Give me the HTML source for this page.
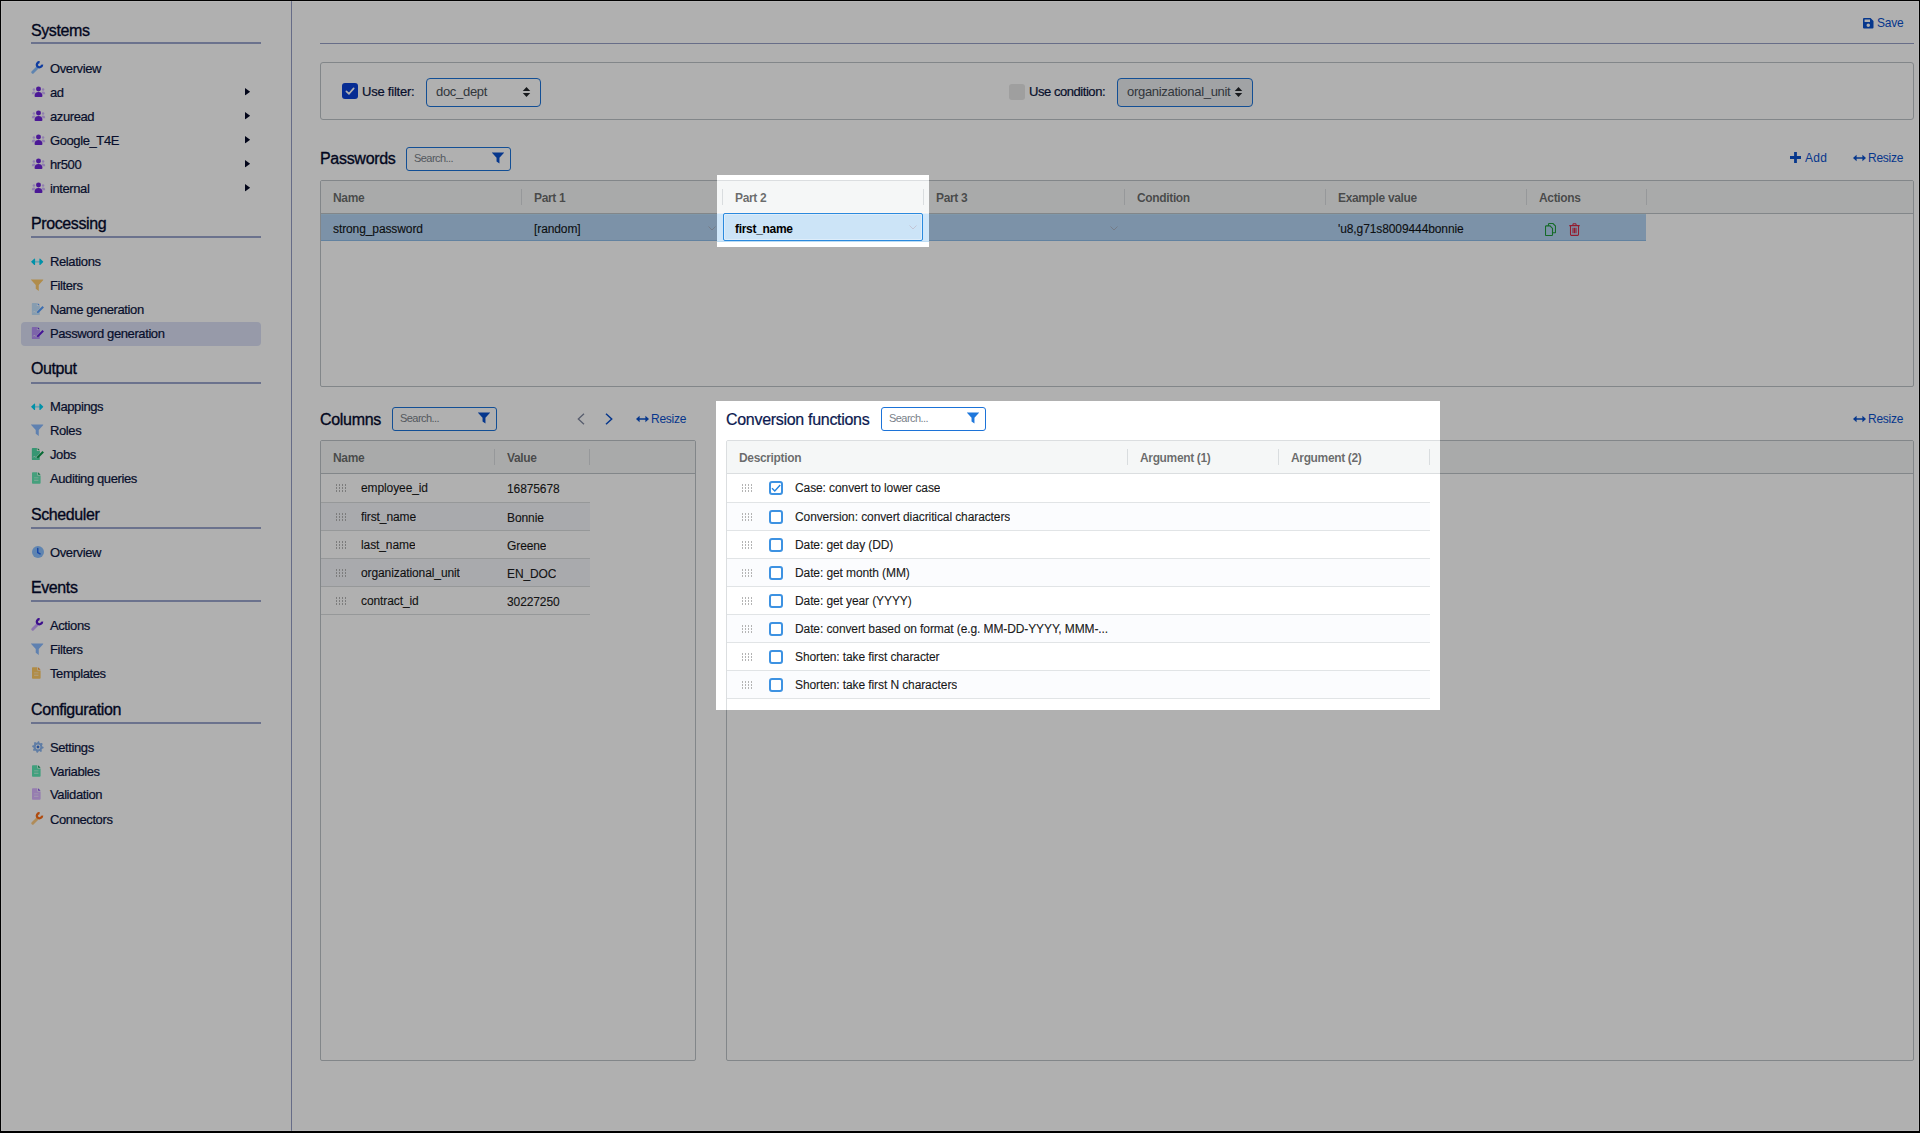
<!DOCTYPE html>
<html lang="en">
<head>
<meta charset="utf-8">
<title>Password generation</title>
<style>
*{box-sizing:border-box;}
html,body{margin:0;padding:0;}
body{width:1920px;height:1133px;overflow:hidden;background:#fff;position:relative;
  font-family:"Liberation Sans",sans-serif;font-size:13px;color:#0b1540;}
.abs{position:absolute;}
svg{display:block;}

/* ---------- sidebar ---------- */
#sidebar{position:absolute;left:0;top:0;width:291px;height:1133px;}
#sidedivider{position:absolute;left:291px;top:0;width:1px;height:1133px;background:#949dc4;}
.sh{position:absolute;left:31px;height:24px;line-height:26px;font-size:16px;color:#040a2e;letter-spacing:-0.4px;white-space:nowrap;-webkit-text-stroke:0.33px #040a2e;}
.sl{position:absolute;left:31px;width:230px;height:2px;background:#9ba6cd;}
.si{position:absolute;left:21px;width:240px;height:24px;line-height:24px;border-radius:4px;white-space:nowrap;}
.selbg{position:absolute;left:0;top:1px;width:240px;height:24px;border-radius:4px;background:#dbe0f5;}
.si .ic{position:absolute;left:10px;top:6px;width:14px;height:14px;}
.si .tx{position:absolute;left:29px;top:1px;font-size:13px;color:#0b1540;letter-spacing:-0.4px;-webkit-text-stroke:0.2px #0b1540;}
.si .car{position:absolute;left:224px;top:8px;width:5.5px;height:7.5px;}

/* ---------- main ---------- */
.link{position:absolute;height:20px;line-height:20px;font-size:13px;color:#0a50cc;white-space:nowrap;}
.link span{display:inline-block;transform:scaleX(.92);transform-origin:0 50%;letter-spacing:-0.25px;}
.hline{position:absolute;left:320px;top:43px;width:1594px;height:1px;background:#969fc6;}
.box{position:absolute;border:1px solid #bdc3c7;background:#fff;border-radius:3px;}
.h2{position:absolute;height:24px;line-height:26px;font-size:16px;color:#040a2e;letter-spacing:-0.3px;white-space:nowrap;-webkit-text-stroke:0.33px #040a2e;}
.lbl{position:absolute;height:20px;line-height:20px;font-size:13px;color:#0b1540;white-space:nowrap;letter-spacing:-0.45px;-webkit-text-stroke:0.2px #0b1540;}
.dd{position:absolute;height:29px;border:1px solid #1c73d8;border-radius:4px;background:#fff;font-size:13px;line-height:25px;color:#495057;padding-left:9px;white-space:nowrap;letter-spacing:-0.3px;}
.dd.dis{background:#e9ecef;}
.dd svg{position:absolute;top:8px;width:9px;height:10px;}
.search{position:absolute;width:105px;height:24px;border:1px solid #1c73d8;border-radius:3px;background:#fff;font-size:11px;line-height:20px;color:#79818a;padding-left:7px;letter-spacing:-0.55px;}
.search svg{position:absolute;right:6px;top:4px;width:12px;height:12px;}
.cb{position:absolute;width:16px;height:16px;border-radius:3px;}

/* ---------- grids (ag balham look) ---------- */
.grid{position:absolute;border:1px solid #bdc3c7;border-radius:2px;background:#fff;overflow:hidden;font-size:12px;color:rgba(0,0,0,.88);}
.ghead{position:absolute;left:0;top:0;right:0;height:33px;background:#f5f7f7;border-bottom:1px solid #bdc3c7;}
.hc{position:absolute;top:0;height:32px;line-height:34px;padding-left:12px;font-weight:bold;font-size:12px;color:rgba(0,0,0,.58);white-space:nowrap;letter-spacing:-0.35px;}
.hc:after{content:"";position:absolute;right:0;top:8px;width:1px;height:16px;background:rgba(189,195,199,.5);}
.row{position:absolute;left:0;height:28px;line-height:29px;white-space:nowrap;}
.row.odd{background:#fbfcfe;}
.dk .row.odd{background:#f5f6fb;}
.row.bt{border-top:1px solid #d9dcde;}
.row.bb{border-bottom:1px solid #d9dcde;height:29px;}
.lt3 .row.bt{border-top-color:#e1e4e6;}
.lt3 .row.bb{border-bottom-color:#e1e4e6;}
.cell{position:absolute;top:0;height:28px;white-space:nowrap;overflow:hidden;letter-spacing:-0.1px;-webkit-text-stroke:0.18px rgba(0,0,0,.88);}
.grip{position:absolute;width:11px;height:8px;}
.chk{position:absolute;width:14px;height:14px;border:2px solid #3d92e2;border-radius:3px;background:#fff;}

/* ---------- dim overlay ---------- */
.lt{position:absolute;z-index:56;background:rgba(255,255,255,.45);}
#dim{position:absolute;left:0;top:0;width:1920px;height:1133px;z-index:50;pointer-events:none;}
#frame{position:absolute;left:0;top:0;width:1920px;height:1133px;z-index:60;pointer-events:none;border:1px solid #000;border-bottom:2px solid #000;box-shadow:inset 0 0 0 1px rgba(255,255,255,.09);}
</style>
</head>
<body>

<!-- icon definitions -->
<svg width="0" height="0" style="position:absolute">
  <defs>
    <symbol id="i-wrench" viewBox="0 0 14 14">
      <path d="M1.9 12.1 L7 7" stroke="var(--c2)" stroke-width="3.1" stroke-linecap="round" fill="none"/>
      <path d="M11.9 3.9 A2.8 2.8 0 1 1 9.3 1.2" stroke="currentColor" stroke-width="2.5" fill="none"/>
    </symbol>
    <symbol id="i-users" viewBox="0 0 15 12">
      <circle cx="2.5" cy="3.9" r="1.35" fill="var(--c2)"/>
      <circle cx="12.5" cy="3.9" r="1.35" fill="var(--c2)"/>
      <path d="M.2 8.4 Q.2 6 2.5 6 Q4 6 4.4 6.8 Q3.2 7.6 3.1 9 L.2 9 Z" fill="var(--c2)"/>
      <path d="M14.8 8.4 Q14.8 6 12.5 6 Q11 6 10.6 6.8 Q11.8 7.6 11.9 9 L14.8 9 Z" fill="var(--c2)"/>
      <circle cx="7.5" cy="3.2" r="2.7" fill="currentColor"/>
      <path d="M3.2 11 Q3.2 6.6 7.5 6.6 Q11.8 6.6 11.8 11 Q11.8 12 10.8 12 L4.2 12 Q3.2 12 3.2 11 Z" fill="currentColor"/>
    </symbol>
    <symbol id="i-arrows" viewBox="0 0 14 8">
      <rect x="4" y="3" width="6" height="2" fill="var(--c2)"/>
      <path d="M0 4 L3.6 .5 Q4.6 -.2 4.6 1 L4.6 7 Q4.6 8.2 3.6 7.5 Z M14 4 L10.4 .5 Q9.4 -.2 9.4 1 L9.4 7 Q9.4 8.2 10.4 7.5 Z" fill="currentColor"/>
    </symbol>
    <symbol id="i-filter" viewBox="0 0 14 14">
      <path d="M.4 .5 L13.6 .5 Q14.3 .5 13.8 1.2 L8.7 6.6 L8.7 13.4 L5.3 11 L5.3 6.6 L.2 1.2 Q-.3 .5 .4 .5 Z" fill="currentColor"/>
    </symbol>
    <symbol id="i-filesig" viewBox="0 0 15 14">
      <path d="M.6 1 Q.6 0 1.6 0 L6.5 0 L6.5 3.5 L10 3.5 L10 6 L5.8 10.2 L5.4 14 L1.6 14 Q.6 14 .6 13 Z M6 10.4 L9.8 10.4 L9.8 14 L5.4 14 Z" fill="var(--c2)"/>
      <path d="M7.4 0 L10 2.7 L7.4 2.7 Z" fill="currentColor"/>
      <path d="M13 3.6 L14.7 5.3 L8.6 11.4 L6.6 11.8 L7 9.7 Z" fill="currentColor"/>
      <path d="M2 11.2 L3.4 9.4 L4.3 10.8 L5.4 10.4" stroke="#fff" stroke-opacity=".7" stroke-width=".8" fill="none"/>
    </symbol>
    <symbol id="i-file" viewBox="0 0 11 14">
      <path d="M0 1 Q0 0 1 0 L6.6 0 L6.6 3.9 L10.5 3.9 L10.5 13 Q10.5 14 9.5 14 L1 14 Q0 14 0 13 Z" fill="var(--c2)"/>
      <path d="M2.6 9.2 H7.9 V10.5 H2.6 Z M2.6 6.4 H7.9 V7.3 H2.6 Z" fill="#fff" fill-opacity=".6"/>
      <path d="M7.5 0 L10.5 3 L7.5 3 Z" fill="currentColor"/>
    </symbol>
    <symbol id="i-clock" viewBox="0 0 14 14">
      <circle cx="7" cy="7" r="7" fill="var(--c2)"/>
      <path d="M6.7 3 L6.7 7.6 L9.4 9.2" stroke="currentColor" stroke-width="1.7" fill="none" stroke-linecap="round"/>
    </symbol>
    <symbol id="i-cog" viewBox="0 0 14 14">
      <path d="M7 0.2 L8.3 .4 L8.7 2 L10 2.7 L11.6 2.2 L12.6 3.6 L11.6 4.9 L12 6.3 L13.6 7 L13.4 8.6 L11.8 9 L11.1 10.3 L11.6 11.9 L10.2 12.7 L8.9 11.8 L7.5 12.2 L6.8 13.8 L5.2 13.5 L4.9 11.9 L3.6 11.2 L2 11.7 L1.1 10.3 L2.1 9 L1.7 7.6 L.2 6.9 L.4 5.3 L2 4.9 L2.7 3.6 L2.2 2 L3.6 1.2 L4.9 2.1 L6.3 1.7 Z M7 4.2 A2.8 2.8 0 1 0 7 9.8 A2.8 2.8 0 1 0 7 4.2 Z" fill="var(--c2)" fill-rule="evenodd"/>
      <circle cx="7" cy="7" r="1.7" fill="currentColor"/>
    </symbol>
    <symbol id="i-caret" viewBox="0 0 6 8"><path d="M0 0 L5.6 4 L0 8 Z" fill="#050a26"/></symbol>
    <symbol id="i-updown" viewBox="0 0 9 11"><path d="M4.5 0 L8.6 4.4 L.4 4.4 Z M4.5 11 L8.6 6.6 L.4 6.6 Z" fill="#23272b"/></symbol>
    <symbol id="i-grip" viewBox="0 0 11 8">
      <g fill="#b4b4b4"><rect x="0" y="0" width="1" height="2"/><rect x="3" y="0" width="1" height="2"/><rect x="6" y="0" width="1" height="2"/><rect x="9" y="0" width="1" height="2"/>
      <rect x="0" y="3" width="1" height="2"/><rect x="3" y="3" width="1" height="2"/><rect x="6" y="3" width="1" height="2"/><rect x="9" y="3" width="1" height="2"/>
      <rect x="0" y="6" width="1" height="2"/><rect x="3" y="6" width="1" height="2"/><rect x="6" y="6" width="1" height="2"/><rect x="9" y="6" width="1" height="2"/></g>
    </symbol>
    <symbol id="i-chev" viewBox="0 0 8 5"><path d="M.5 .5 L4 4 L7.5 .5" stroke="currentColor" stroke-width="1" fill="none"/></symbol>
  </defs>
</svg>

<div id="sidebar">
<div class="sh" style="top:18px">Systems</div>
<div class="sl" style="top:42px"></div>
<div class="si" style="top:56px"><svg class="ic" style="color:#1657e8;--c2:#8ac0ff;width:13px;height:13px;top:5px;left:10px"><use href="#i-wrench"/></svg><span class="tx">Overview</span></div>
<div class="si" style="top:80px"><svg class="ic" style="color:#6d24d9;--c2:#d3b8ff;width:15px;height:11px;top:6px;left:10px"><use href="#i-users"/></svg><span class="tx">ad</span><svg class="car"><use href="#i-caret"/></svg></div>
<div class="si" style="top:104px"><svg class="ic" style="color:#6d24d9;--c2:#d3b8ff;width:15px;height:11px;top:6px;left:10px"><use href="#i-users"/></svg><span class="tx">azuread</span><svg class="car"><use href="#i-caret"/></svg></div>
<div class="si" style="top:128px"><svg class="ic" style="color:#6d24d9;--c2:#d3b8ff;width:15px;height:11px;top:6px;left:10px"><use href="#i-users"/></svg><span class="tx">Google_T4E</span><svg class="car"><use href="#i-caret"/></svg></div>
<div class="si" style="top:152px"><svg class="ic" style="color:#6d24d9;--c2:#d3b8ff;width:15px;height:11px;top:6px;left:10px"><use href="#i-users"/></svg><span class="tx">hr500</span><svg class="car"><use href="#i-caret"/></svg></div>
<div class="si" style="top:176px"><svg class="ic" style="color:#6d24d9;--c2:#d3b8ff;width:15px;height:11px;top:6px;left:10px"><use href="#i-users"/></svg><span class="tx">internal</span><svg class="car"><use href="#i-caret"/></svg></div>
<div class="sh" style="top:211px">Processing</div>
<div class="sl" style="top:236px"></div>
<div class="si" style="top:249px"><svg class="ic" style="color:#00d3f5;--c2:#9beeff;width:12.5px;height:7.5px;top:8.5px;left:10px"><use href="#i-arrows"/></svg><span class="tx">Relations</span></div>
<div class="si" style="top:273px"><svg class="ic" style="color:#ffcb6d;--c2:#ffcb6d;width:12.5px;height:12.5px;top:6px;left:10px"><use href="#i-filter"/></svg><span class="tx">Filters</span></div>
<div class="si" style="top:297px"><svg class="ic" style="color:#579fff;--c2:#c4e4ff;width:13.5px;height:12px;top:6px;left:10px"><use href="#i-filesig"/></svg><span class="tx">Name generation</span></div>
<div class="si" style="top:321px"><div class="selbg"></div><svg class="ic" style="color:#651dd9;--c2:#b591f6;width:13.5px;height:12px;top:6px;left:10px"><use href="#i-filesig"/></svg><span class="tx">Password generation</span></div>
<div class="sh" style="top:356px">Output</div>
<div class="sl" style="top:382px"></div>
<div class="si" style="top:394px"><svg class="ic" style="color:#00d3f5;--c2:#9beeff;width:12.5px;height:7.5px;top:8.5px;left:10px"><use href="#i-arrows"/></svg><span class="tx">Mappings</span></div>
<div class="si" style="top:418px"><svg class="ic" style="color:#8abbff;--c2:#8abbff;width:12.5px;height:12.5px;top:6px;left:10px"><use href="#i-filter"/></svg><span class="tx">Roles</span></div>
<div class="si" style="top:442px"><svg class="ic" style="color:#0a9a4c;--c2:#50d9a7;width:13.5px;height:12px;top:6px;left:10px"><use href="#i-filesig"/></svg><span class="tx">Jobs</span></div>
<div class="si" style="top:466px"><svg class="ic" style="color:#0a9e55;--c2:#65e8b5;width:9px;height:12px;top:6px;left:10.5px"><use href="#i-file"/></svg><span class="tx">Auditing queries</span></div>
<div class="sh" style="top:502px">Scheduler</div>
<div class="sl" style="top:527px"></div>
<div class="si" style="top:540px"><svg class="ic" style="color:#1d65f6;--c2:#8ac0ff;width:12px;height:12px;top:6px;left:10.5px"><use href="#i-clock"/></svg><span class="tx">Overview</span></div>
<div class="sh" style="top:575px">Events</div>
<div class="sl" style="top:600px"></div>
<div class="si" style="top:613px"><svg class="ic" style="color:#5716cb;--c2:#cba7ff;width:13px;height:13px;top:5px;left:10px"><use href="#i-wrench"/></svg><span class="tx">Actions</span></div>
<div class="si" style="top:637px"><svg class="ic" style="color:#8abbff;--c2:#8abbff;width:12.5px;height:12.5px;top:6px;left:10px"><use href="#i-filter"/></svg><span class="tx">Filters</span></div>
<div class="si" style="top:661px"><svg class="ic" style="color:#ff911d;--c2:#ffcb65;width:9px;height:12px;top:6px;left:10.5px"><use href="#i-file"/></svg><span class="tx">Templates</span></div>
<div class="sh" style="top:697px">Configuration</div>
<div class="sl" style="top:722px"></div>
<div class="si" style="top:735px"><svg class="ic" style="color:#3a74d9;--c2:#8ab5ef;width:12px;height:12px;top:6px;left:10.5px"><use href="#i-cog"/></svg><span class="tx">Settings</span></div>
<div class="si" style="top:759px"><svg class="ic" style="color:#009f57;--c2:#5ee8b5;width:9px;height:12px;top:6px;left:10.5px"><use href="#i-file"/></svg><span class="tx">Variables</span></div>
<div class="si" style="top:782px"><svg class="ic" style="color:#8248e8;--c2:#d9b5ff;width:9px;height:12px;top:6px;left:10.5px"><use href="#i-file"/></svg><span class="tx">Validation</span></div>
<div class="si" style="top:807px"><svg class="ic" style="color:#fe6d16;--c2:#ffcb82;width:13px;height:13px;top:5px;left:10px"><use href="#i-wrench"/></svg><span class="tx">Connectors</span></div>
</div>
<div id="sidedivider"></div>
<div id="main">
<!-- top bar -->
<div class="link" style="left:1862px;top:13px;"><svg style="position:absolute;left:1px;top:5px;width:10.5px;height:10.5px;color:#0a50cc" viewBox="0 0 12 12"><path d="M1.2 0 H8.6 L12 3.4 V10.8 Q12 12 10.8 12 H1.2 Q0 12 0 10.8 V1.2 Q0 0 1.2 0 Z M1.8 1.6 V4.6 H8 V1.6 Z M6 6.3 A2 2 0 1 0 6 10.3 A2 2 0 1 0 6 6.3 Z" fill="currentColor" fill-rule="evenodd"/></svg><span style="margin-left:15px">Save</span></div>
<div class="hline"></div>

<!-- filter / condition box -->
<div class="box" style="left:320px;top:62px;width:1594px;height:58px;"></div>
<div class="cb" style="left:342px;top:83px;background:#0a40d6;"><svg viewBox="0 0 16 16" width="16" height="16"><path d="M4.4 8.3 L7 10.8 L11.7 5.4" stroke="#fff" stroke-width="1.7" fill="none" stroke-linecap="round" stroke-linejoin="round"/></svg></div>
<div class="lbl" style="left:362px;top:82px;letter-spacing:-0.22px">Use filter:</div>
<div class="dd" style="left:426px;top:78px;width:115px;">doc_dept<svg style="left:95px"><use href="#i-updown"/></svg></div>
<div class="cb" style="left:1009px;top:84px;background:#e6e6e6;"></div>
<div class="lbl" style="left:1029px;top:82px;">Use condition:</div>
<div class="dd dis" style="left:1117px;top:78px;width:136px;">organizational_unit<svg style="left:116px"><use href="#i-updown"/></svg></div>

<!-- passwords -->
<div class="h2" style="left:320px;top:146px;">Passwords</div>
<div class="search" style="left:406px;top:147px;">Search...<svg style="color:#0a50cc"><use href="#i-filter"/></svg></div>
<div class="link" style="left:1790px;top:148px;"><svg style="position:absolute;left:0;top:4px;width:11px;height:11px;color:#0a50cc" viewBox="0 0 11 11"><path d="M4.1 0 H6.9 V4.1 H11 V6.9 H6.9 V11 H4.1 V6.9 H0 V4.1 H4.1 Z" fill="currentColor"/></svg><span style="margin-left:15px;letter-spacing:.35px">Add</span></div>
<div class="link" style="left:1853px;top:148px;"><svg style="position:absolute;left:0;top:6px;width:13px;height:8px;color:#0a50cc" viewBox="0 0 13 8"><path d="M0 4 L3.6 .8 V3.2 H9.4 V.8 L13 4 L9.4 7.2 V4.8 H3.6 V7.2 Z" fill="currentColor"/></svg><span style="margin-left:15px">Resize</span></div>

<div class="grid" id="g1" style="left:320px;top:180px;width:1594px;height:207px;">
  <div class="ghead">
    <div class="hc" style="left:0;width:201px;">Name</div>
    <div class="hc" style="left:201px;width:201px;">Part 1</div>
    <div class="hc" style="left:402px;width:201px;">Part 2</div>
    <div class="hc" style="left:603px;width:201px;">Part 3</div>
    <div class="hc" style="left:804px;width:201px;">Condition</div>
    <div class="hc" style="left:1005px;width:201px;">Example value</div>
    <div class="hc" style="left:1206px;width:120px;">Actions</div>
  </div>
  <div class="row" style="top:33px;width:1325px;height:27px;background:#b4d4f3;border-top:1px solid #b9dbf5;border-bottom:1px solid #8fbde8;">
    <div class="cell" style="left:12px;">strong_password</div>
    <div class="cell" style="left:213px;">[random]</div>
    <svg style="position:absolute;left:387px;top:11px;width:8px;height:5px;color:#a9b4c6"><use href="#i-chev"/></svg>
    <svg style="position:absolute;left:789px;top:11px;width:8px;height:5px;color:#a9b4c6"><use href="#i-chev"/></svg>
    <div class="cell" style="left:1017px;">'u8,g71s8009444bonnie</div>
    <svg style="position:absolute;left:1224px;top:8px;width:11px;height:13px;" viewBox="0 0 11 13"><path d="M3.5 2.5 V1.3 Q3.5 .5 4.3 .5 H8 L10.5 3 V9 Q10.5 9.8 9.7 9.8 H7.5 M.5 3.7 Q.5 2.9 1.3 2.9 H5 L7.5 5.4 V11.7 Q7.5 12.5 6.7 12.5 H1.3 Q.5 12.5 .5 11.7 Z" stroke="#1f9a3a" stroke-width="1.1" fill="none"/></svg>
    <svg style="position:absolute;left:1248px;top:8px;width:11px;height:13px;" viewBox="0 0 11 13"><path d="M.3 2.6 H10.7 M3.6 2.4 L4.3 .7 H6.7 L7.4 2.4 M1.5 2.8 V11.5 Q1.5 12.4 2.4 12.4 H8.6 Q9.5 12.4 9.5 11.5 V2.8 M4 4.8 V10.3 M5.5 4.8 V10.3 M7 4.8 V10.3" stroke="#d62945" stroke-width="1.1" fill="none"/></svg>
  </div>
</div>

<!-- columns -->
<div class="h2" style="left:320px;top:407px;">Columns</div>
<div class="search" style="left:392px;top:407px;">Search...<svg style="color:#0a50cc"><use href="#i-filter"/></svg></div>
<svg class="abs" style="left:577px;top:413px;width:8px;height:12px;" viewBox="0 0 8 12"><path d="M7 .7 L1.3 6 L7 11.3" stroke="#7f879f" stroke-width="1.3" fill="none"/></svg>
<svg class="abs" style="left:605px;top:413px;width:8px;height:12px;" viewBox="0 0 8 12"><path d="M1 .7 L6.7 6 L1 11.3" stroke="#0a50cc" stroke-width="1.5" fill="none"/></svg>
<div class="link" style="left:636px;top:409px;"><svg style="position:absolute;left:0;top:6px;width:13px;height:8px;color:#0a50cc" viewBox="0 0 13 8"><path d="M0 4 L3.6 .8 V3.2 H9.4 V.8 L13 4 L9.4 7.2 V4.8 H3.6 V7.2 Z" fill="currentColor"/></svg><span style="margin-left:15px">Resize</span></div>

<div class="grid dk" id="g2" style="left:320px;top:440px;width:376px;height:621px;">
  <div class="ghead">
    <div class="hc" style="left:0;width:174px;">Name</div>
    <div class="hc" style="left:174px;width:95px;">Value</div>
  </div>
  <div class="row" style="top:33px;width:269px;"><svg class="grip" style="left:15px;top:10px"><use href="#i-grip"/></svg><div class="cell" style="left:40px;">employee_id</div><div class="cell" style="left:186px;top:1px;">16875678</div></div>
  <div class="row odd bt" style="top:61px;width:269px;"><svg class="grip" style="left:15px;top:10px"><use href="#i-grip"/></svg><div class="cell" style="left:40px;">first_name</div><div class="cell" style="left:186px;top:1px;">Bonnie</div></div>
  <div class="row bt" style="top:89px;width:269px;"><svg class="grip" style="left:15px;top:10px"><use href="#i-grip"/></svg><div class="cell" style="left:40px;">last_name</div><div class="cell" style="left:186px;top:1px;">Greene</div></div>
  <div class="row odd bt" style="top:117px;width:269px;"><svg class="grip" style="left:15px;top:10px"><use href="#i-grip"/></svg><div class="cell" style="left:40px;">organizational_unit</div><div class="cell" style="left:186px;top:1px;">EN_DOC</div></div>
  <div class="row bt bb" style="top:145px;width:269px;"><svg class="grip" style="left:15px;top:10px"><use href="#i-grip"/></svg><div class="cell" style="left:40px;">contract_id</div><div class="cell" style="left:186px;top:1px;">30227250</div></div>
</div>

<!-- conversion functions -->
<div class="h2" id="cfh" style="left:726px;top:407px;color:#0c1950;-webkit-text-stroke:0.22px #0c1950;">Conversion functions</div>
<div class="search" style="left:881px;top:407px;">Search...<svg style="color:#1f78dc"><use href="#i-filter"/></svg></div>
<div class="link" style="left:1853px;top:409px;"><svg style="position:absolute;left:0;top:6px;width:13px;height:8px;color:#0a50cc" viewBox="0 0 13 8"><path d="M0 4 L3.6 .8 V3.2 H9.4 V.8 L13 4 L9.4 7.2 V4.8 H3.6 V7.2 Z" fill="currentColor"/></svg><span style="margin-left:15px">Resize</span></div>

<div class="grid lt3" id="g3" style="left:726px;top:440px;width:1188px;height:621px;">
  <div class="ghead">
    <div class="hc" style="left:0;width:401px;">Description</div>
    <div class="hc" style="left:401px;width:151px;">Argument (1)</div>
    <div class="hc" style="left:552px;width:151px;">Argument (2)</div>
  </div>
  <div class="row" style="top:33px;width:703px;"><svg class="grip" style="left:15px;top:10px"><use href="#i-grip"/></svg><div class="chk" style="left:42px;top:7px;"><svg viewBox="0 0 10 10" width="10" height="10"><path d="M1 5.2 L3.8 7.9 L9.2 2" stroke="#2383de" stroke-width="1.4" fill="none"/></svg></div><div class="cell" style="left:68px;">Case: convert to lower case</div></div>
  <div class="row odd bt" style="top:61px;width:703px;"><svg class="grip" style="left:15px;top:10px"><use href="#i-grip"/></svg><div class="chk" style="left:42px;top:7px;"></div><div class="cell" style="left:68px;">Conversion: convert diacritical characters</div></div>
  <div class="row bt" style="top:89px;width:703px;"><svg class="grip" style="left:15px;top:10px"><use href="#i-grip"/></svg><div class="chk" style="left:42px;top:7px;"></div><div class="cell" style="left:68px;">Date: get day (DD)</div></div>
  <div class="row odd bt" style="top:117px;width:703px;"><svg class="grip" style="left:15px;top:10px"><use href="#i-grip"/></svg><div class="chk" style="left:42px;top:7px;"></div><div class="cell" style="left:68px;">Date: get month (MM)</div></div>
  <div class="row bt" style="top:145px;width:703px;"><svg class="grip" style="left:15px;top:10px"><use href="#i-grip"/></svg><div class="chk" style="left:42px;top:7px;"></div><div class="cell" style="left:68px;">Date: get year (YYYY)</div></div>
  <div class="row odd bt" style="top:173px;width:703px;"><svg class="grip" style="left:15px;top:10px"><use href="#i-grip"/></svg><div class="chk" style="left:42px;top:7px;"></div><div class="cell" style="left:68px;">Date: convert based on format (e.g. MM-DD-YYYY, MMM-...</div></div>
  <div class="row bt" style="top:201px;width:703px;"><svg class="grip" style="left:15px;top:10px"><use href="#i-grip"/></svg><div class="chk" style="left:42px;top:7px;"></div><div class="cell" style="left:68px;">Shorten: take first character</div></div>
  <div class="row odd bt bb" style="top:229px;width:703px;"><svg class="grip" style="left:15px;top:10px"><use href="#i-grip"/></svg><div class="chk" style="left:42px;top:7px;"></div><div class="cell" style="left:68px;">Shorten: take first N characters</div></div>
</div>

</div>
<!-- highlight layers + dim overlay -->
<svg id="dim" viewBox="0 0 1920 1133" width="1920" height="1133"><path fill="rgba(0,0,0,0.31)" fill-rule="evenodd" d="M0 0 H1920 V1133 H0 Z M717 175 H929 V247 H717 Z M716 401 H1440 V710 H716 Z"/></svg>
<!-- highlighted "Part 2" cell being edited (shown above the dim layer) -->
<div id="hl1" style="position:absolute;left:717px;top:175px;width:212px;height:72px;z-index:55;overflow:hidden;">
  <div class="abs" style="left:0;top:37px;width:212px;height:2px;background:#fdf7f3;"></div>
  <div class="abs" style="left:0;top:38px;width:212px;height:29px;background:#d0e7fa;border-top:1px solid #e4f1fb;"></div>
  <div class="abs" style="left:0;top:66px;width:212px;height:1px;background:#bcdcf4;"></div>
  <div id="editcell" class="abs" style="left:6px;top:38px;width:200px;height:28px;border:1px solid #2a8ade;border-radius:2px;background:#cce4f7;font-size:12px;font-weight:bold;color:#000;line-height:30px;padding-left:11px;letter-spacing:-0.3px;box-shadow:inset 0 0 0 1px rgba(255,255,255,.35);">first_name<svg style="position:absolute;left:185px;top:11px;width:8px;height:5px;color:#c3c6d6"><use href="#i-chev"/></svg></div>
</div>
<!-- borders appear lighter inside the highlighted areas -->
<div class="lt" style="left:726px;top:440px;width:714px;height:1px;"></div>
<div class="lt" style="left:726px;top:441px;width:1px;height:269px;"></div>
<div class="lt" style="left:727px;top:473px;width:713px;height:1px;"></div>
<div class="lt" style="left:717px;top:180px;width:212px;height:1px;"></div>
<div id="frame"></div>

</body>
</html>
